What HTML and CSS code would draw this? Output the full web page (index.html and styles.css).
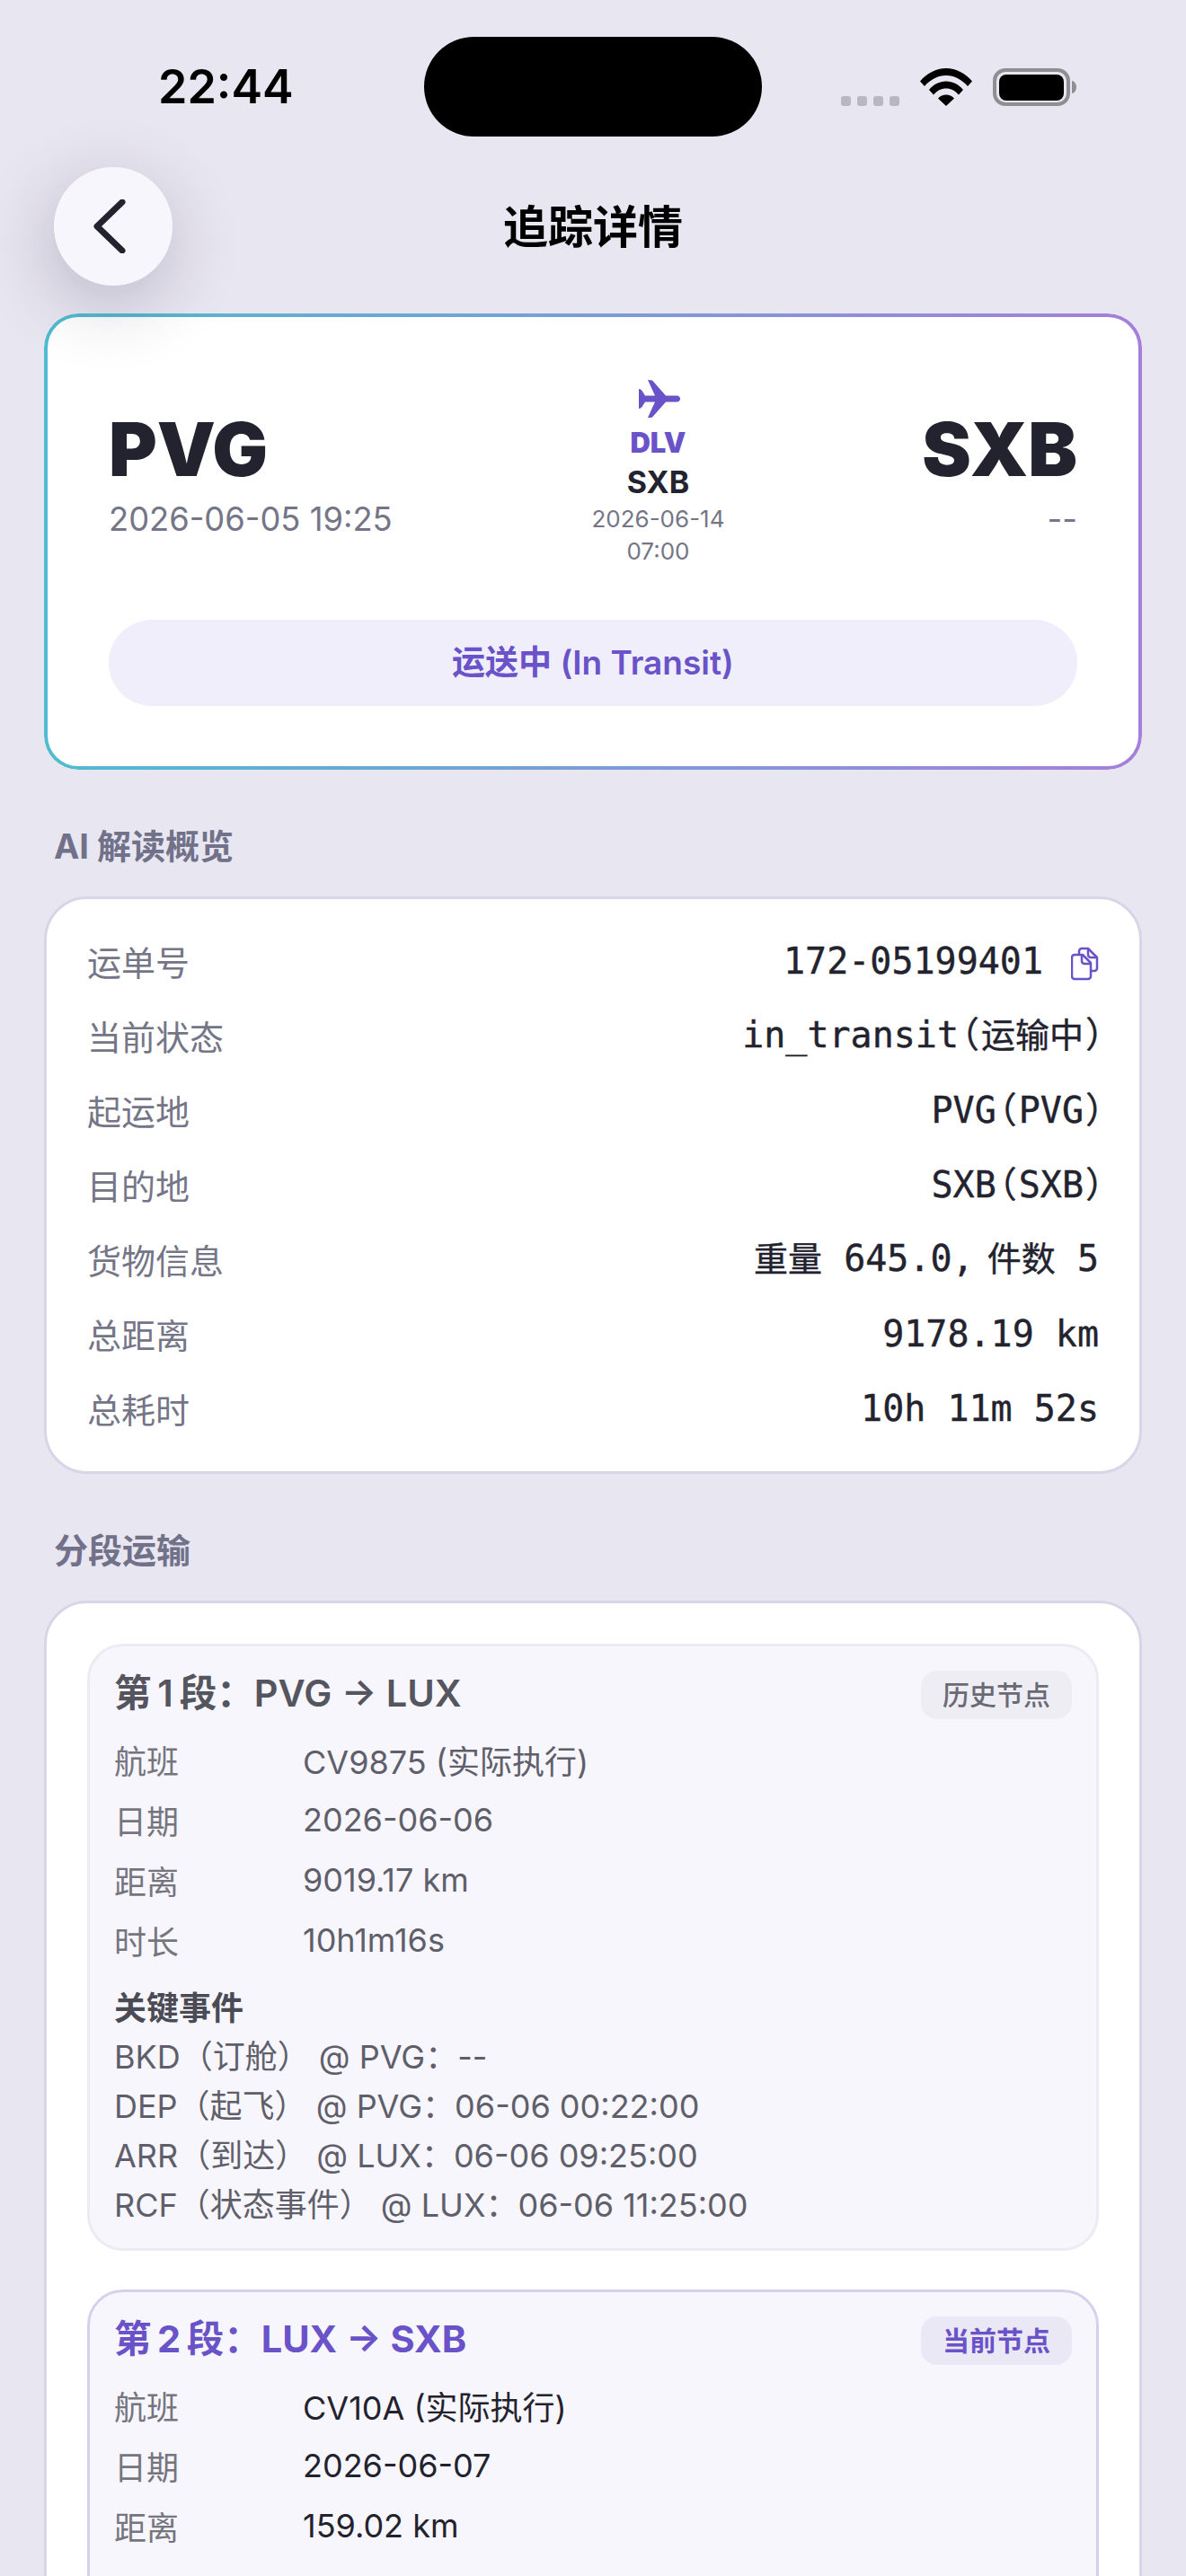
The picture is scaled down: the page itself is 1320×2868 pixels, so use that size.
FILE: index.html
```html
<!DOCTYPE html>
<html lang="zh-CN">
<head>
    <meta charset="UTF-8">
    <meta name="viewport" content="width=device-width, initial-scale=1.0">
    <title>追踪详情</title>
    <link rel="stylesheet" href="styles.css">
</head>
<body>
    <div class="status-bar">
        <div class="status-time">22:44</div>
        <div class="island"></div>
        <div class="status-icons">
            <div class="signal-dots"><span></span><span></span><span></span><span></span></div>
            <svg class="wifi-icon" width="58" height="42" viewBox="0 0 58 42">
                <path d="M0 14.500C7.500 5.500 18 0 29 0s21.500 5.500 29 14.500L53 20C46.500 12.500 38 8 29 8S11.500 12.500 5 20Z"/>
                <path d="M10 24C15 18 21.500 14.500 29 14.500S43 18 48 24l-5 5.500C39 25 34.500 22.500 29 22.500S19 25 15 29.500Z"/>
                <path d="M20 33.500C22.500 31 25.500 29.500 29 29.500s6.500 1.500 9 4L29 42Z"/>
            </svg>
            <svg class="battery-icon" width="93" height="42" viewBox="0 0 93 42">
                <rect x="2" y="2" width="82" height="38" rx="12" fill="none" stroke="#8f8e94" stroke-width="4"/>
                <rect x="7" y="7" width="72" height="29" rx="8" fill="#000"/>
                <path d="M88 14c3 .5 5 3.500 5 7s-2 6.500-5 7Z" fill="#8f8e94"/>
            </svg>
        </div>
    </div>

    <div class="top-nav">
        <div class="back-btn">
            <svg width="40" height="60" viewBox="0 0 40 60" fill="none" stroke="#23232f" stroke-width="7" stroke-linecap="round" stroke-linejoin="round">
                <path d="M34 3 6 30l28 27"/>
            </svg>
        </div>
        <div class="nav-title">追踪详情</div>
    </div>

    <div class="main">
        <div class="hero-card">
            <div class="route">
                <div class="route-end">
                    <div class="airport">PVG</div>
                    <div class="route-time">2026-06-05 19:25</div>
                </div>
                <div class="route-mid">
                    <svg class="plane-icon" width="46" height="42" viewBox="0 0 46 42">
                        <path d="M42 17.500C45 17.500 46 19.500 46 21S45 24.500 42 24.500H30L15 41.500Q14 42 10 42L18 24.500H7L3.500 30Q2 32 0 32V10Q2 10 3.500 12L7 17.500H18L10 0Q14 0 15 .5L30 17.500Z"/>
                    </svg>
                    <div class="mid-code">DLV</div>
                    <div class="mid-airport">SXB</div>
                    <div class="mid-time">2026-06-14<br>07:00</div>
                </div>
                <div class="route-end route-end-right">
                    <div class="airport">SXB</div>
                    <div class="route-time">--</div>
                </div>
            </div>
            <div class="status-pill">运送中 (In Transit)</div>
        </div>

        <div class="section-title">AI 解读概览</div>
        <div class="card info-card">
            <div class="info-row">
                <span class="info-label">运单号</span>
                <span class="info-value">172-05199401<svg class="copy-icon" width="31" height="38" viewBox="0 0 31 38" fill="none" stroke="#6a52c8" stroke-width="2.500" stroke-linejoin="round">
                        <path d="M4 9h9l9 9v15a3 3 0 0 1-3 3H4a3 3 0 0 1-3-3V12a3 3 0 0 1 3-3z"/>
                        <path d="M12 10v6a3 3 0 0 0 3 3h6"/>
                        <path d="M9 9V5a3 3 0 0 1 3-3h7l10 10v12a3 3 0 0 1-3 3h-4"/>
                        <path d="M19 3v6a3 3 0 0 0 3 3h6"/>
                    </svg></span>
            </div>
            <div class="info-row">
                <span class="info-label">当前状态</span>
                <span class="info-value">in_transit<span class="paren-open">（</span><span class="cjk">运输中</span><span class="paren-close">）</span></span>
            </div>
            <div class="info-row">
                <span class="info-label">起运地</span>
                <span class="info-value">PVG<span class="paren-open">（</span>PVG<span class="paren-close">）</span></span>
            </div>
            <div class="info-row">
                <span class="info-label">目的地</span>
                <span class="info-value">SXB<span class="paren-open">（</span>SXB<span class="paren-close">）</span></span>
            </div>
            <div class="info-row">
                <span class="info-label">货物信息</span>
                <span class="info-value"><span class="cjk">重量</span> 645.0<span class="comma">,</span> <span class="cjk">件数</span> 5</span>
            </div>
            <div class="info-row">
                <span class="info-label">总距离</span>
                <span class="info-value">9178.19 km</span>
            </div>
            <div class="info-row">
                <span class="info-label">总耗时</span>
                <span class="info-value">10h 11m 52s</span>
            </div>
        </div>

        <div class="section-title">分段运输</div>
        <div class="card segments-card">
            <div class="segment">
                <div class="segment-head">
                    <div class="segment-title">第&#8201;1&#8201;段：PVG → LUX</div>
                    <div class="segment-badge">历史节点</div>
                </div>
                <div class="segment-row"><span class="segment-label">航班</span><span>CV9875 (实际执行)</span></div>
                <div class="segment-row"><span class="segment-label">日期</span><span>2026-06-06</span></div>
                <div class="segment-row"><span class="segment-label">距离</span><span>9019.17 km</span></div>
                <div class="segment-row"><span class="segment-label">时长</span><span>10h1m16s</span></div>
                <div class="events-title">关键事件</div>
                <div class="event">BKD（订舱） @ PVG：--</div>
                <div class="event">DEP（起飞） @ PVG：06-06 00:22:00</div>
                <div class="event">ARR（到达） @ LUX：06-06 09:25:00</div>
                <div class="event">RCF（状态事件） @ LUX：06-06 11:25:00</div>
            </div>
            <div class="segment segment-current">
                <div class="segment-head">
                    <div class="segment-title">第&#8201;2&#8201;段：LUX → SXB</div>
                    <div class="segment-badge">当前节点</div>
                </div>
                <div class="segment-row"><span class="segment-label">航班</span><span>CV10A (实际执行)</span></div>
                <div class="segment-row"><span class="segment-label">日期</span><span>2026-06-07</span></div>
                <div class="segment-row"><span class="segment-label">距离</span><span>159.02 km</span></div>
            </div>
        </div>
    </div>
</body>
</html>
```

FILE: styles.css
```css
html {
    height: 100%;
    overflow: hidden;
}

body {
    font-family: Inter, 'Noto Sans CJK SC', sans-serif;
    background-color: #e8e6f0;
    color: #23232f;
    margin: 0;
    height: 2868px;
    overflow: hidden;
}

.status-bar {
    display: flex;
    align-items: center;
    height: 111px;
    padding: 41px 122px 0 176px;
}

.status-time {
    font-size: 52px;
    font-weight: 600;
    color: #000;
    margin-right: 145px;
}

.island {
    width: 376px;
    height: 111px;
    border-radius: 56px;
    background-color: #000;
}

.status-icons {
    display: flex;
    align-items: flex-end;
    margin-left: auto;
}

.signal-dots {
    display: flex;
    gap: 7px;
    margin-right: 23px;
}

.signal-dots span {
    width: 11px;
    height: 11px;
    border-radius: 3px;
    background-color: #b9b7c0;
}

.wifi-icon {
    margin-right: 23px;
}

.top-nav {
    display: flex;
    align-items: center;
    justify-content: center;
    height: 132px;
    margin-top: 34px;
    position: relative;
}

.back-btn {
    position: absolute;
    top: 0;
    left: 60px;
    z-index: 5;
    width: 132px;
    height: 132px;
    border-radius: 50%;
    background-color: #f8f6fd;
    display: flex;
    align-items: center;
    justify-content: center;
    box-shadow: -4px 20px 80px rgba(40, 35, 70, 0.24);
}

.back-btn svg {
    margin-left: -8px;
}

.nav-title {
    font-size: 50px;
    font-weight: 600;
    color: #000;
    margin-bottom: 6px;
}

.main {
    padding: 31px 49px 0;
}

.hero-card {
    box-sizing: border-box;
    height: 508px;
    padding: 74px 72px 0;
    border-radius: 48px;
    background-color: #fff;
    position: relative;
}

/* gradient ring has a tighter corner than the white card under it */
.hero-card::before {
    content: "";
    position: absolute;
    inset: 0;
    padding: 4px;
    border-radius: 38px;
    background: linear-gradient(90deg, #4fbccf, #a57fdb);
    -webkit-mask: linear-gradient(#fff 0 0) content-box, linear-gradient(#fff 0 0);
    -webkit-mask-composite: xor;
    mask-composite: exclude;
    pointer-events: none;
}

.route {
    display: flex;
    justify-content: space-between;
    height: 267px;
}

.route-end {
    padding-top: 37px;
}

.route-end-right {
    text-align: right;
}

.airport {
    font-size: 82px;
    font-weight: 900;
    line-height: 82px;
    color: #23232f;
}

.route-time {
    font-size: 36.300px;
    line-height: 44px;
    margin-top: 14px;
    color: #757588;
}

.route-mid {
    display: flex;
    flex-direction: column;
    align-items: center;
    padding-left: 2px;
}

.plane-icon {
    fill: #6a52c8;
    margin-left: 3px;
}

.mid-code {
    font-size: 31px;
    font-weight: 900;
    line-height: 36px;
    margin-top: 10px;
    color: #6a52c8;
}

.mid-airport {
    font-size: 34px;
    font-weight: 700;
    line-height: 40px;
    margin-top: 6px;
}

.mid-time {
    font-size: 26px;
    line-height: 36px;
    margin-top: 3px;
    text-align: center;
    color: #757588;
}

.status-pill {
    height: 96px;
    line-height: 96px;
    border-radius: 48px;
    text-align: center;
    font-size: 37px;
    font-weight: 600;
    color: #6a52c8;
    background-color: #f0eefa;
}

.section-title {
    font-size: 38px;
    font-weight: 700;
    line-height: 48px;
    padding-left: 11px;
    margin: 61px 0 32px;
    color: #71718a;
}

.card {
    background-color: #fff;
    border: 3px solid #d9d5e8;
    border-radius: 48px;
}

.info-card {
    padding: 27px 45px 29px;
}

.info-row {
    display: flex;
    align-items: center;
    justify-content: space-between;
    height: 83px;
}

.info-label {
    font-size: 38px;
    color: #757588;
}

.info-value {
    font-family: 'DejaVu Sans Mono', 'Noto Sans CJK SC', monospace;
    font-size: 40px;
    line-height: 56px;
    font-feature-settings: "halt";
    white-space: pre;
    -webkit-text-stroke: 0.4px #23232f;
    color: #23232f;
}

.cjk {
    font-size: 38px;
}

.paren-open {
    margin: 0 2px 0 3px;
}

.paren-close {
    margin: 0 -5px 0 2px;
}

.comma {
    letter-spacing: -9px;
}

.copy-icon {
    margin-left: 31px;
    vertical-align: middle;
}

.segments-card {
    padding: 45px 45px 60px;
}

.segment {
    box-sizing: border-box;
    height: 676px;
    padding: 27px 27px 0;
    border: 3px solid #ecebf3;
    border-radius: 40px;
    background-color: #f7f6fc;
    color: #5f5f6b;
}

.segment + .segment {
    margin-top: 43px;
}

.segment-current {
    height: auto;
    padding-bottom: 60px;
    border-color: #d6d0ee;
    color: #23232f;
}

.segment-head {
    display: flex;
    align-items: center;
    justify-content: space-between;
    height: 54px;
    margin-bottom: 11px;
}

.segment-title {
    font-size: 41.500px;
    font-weight: 600;
    margin-bottom: 10px;
    color: #55555f;
}

.segment-current .segment-title {
    font-weight: 700;
    color: #6a52c8;
}

.segment-badge {
    font-size: 30px;
    font-weight: 500;
    line-height: 54px;
    padding: 0 24px;
    border-radius: 18px;
    background-color: #eeedf3;
    color: #6a6a76;
}

.segment-current .segment-badge {
    font-weight: 600;
    background-color: #ebe8f6;
    color: #6a52c8;
}

.segment-row {
    display: flex;
    align-items: center;
    height: 67px;
    font-size: 36px;
}

.segment-label {
    width: 210px;
    color: #757580;
}

.events-title {
    font-size: 36px;
    font-weight: 600;
    line-height: 50px;
    margin-top: 18px;
    margin-bottom: 2px;
    color: #4b4b55;
}

.event {
    font-size: 36px;
    line-height: 55px;
}
```
